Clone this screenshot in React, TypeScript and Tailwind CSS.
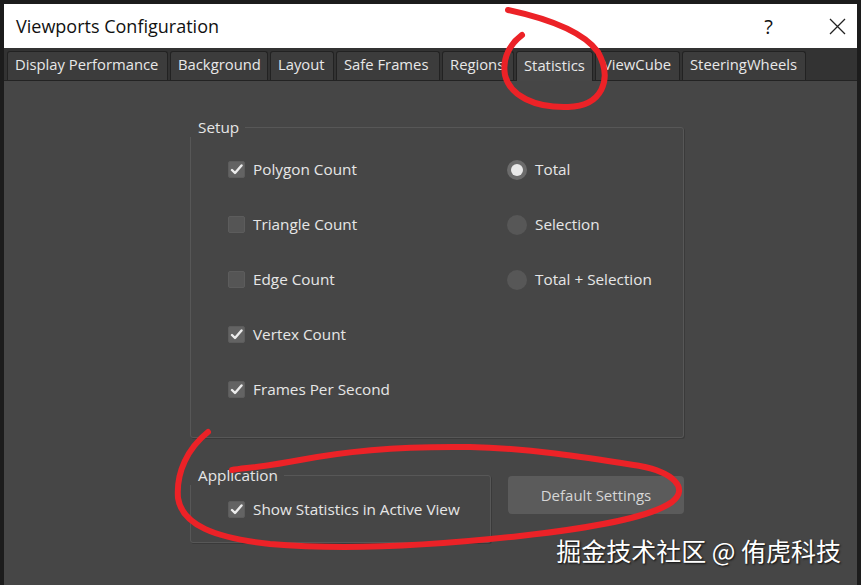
import { ReactNode } from "react";

const tabs = [
  { label: "Display Performance", w: "w-[161px]" },
  { label: "Background", w: "w-[98px]" },
  { label: "Layout", w: "w-[64px]" },
  { label: "Safe Frames", w: "w-[104px]" },
  { label: "Regions", w: "w-[72px]" },
  { label: "Statistics", w: "w-[77px]", active: true },
  { label: "ViewCube", w: "w-[85px]" },
  { label: "SteeringWheels", w: "w-[124px]" },
];

const Check = ({ on, children }: { on?: boolean; children: ReactNode }) => (
  <div className="flex items-center gap-[8px] h-[55px]">
    <span
      className={
        "w-[17px] h-[17px] rounded-[2px] flex items-center justify-center border border-[#5c5c5c] " +
        (on ? "bg-[#636363]" : "bg-[#555555]")
      }
    >
      {on && (
        <svg width="13" height="13" viewBox="0 0 13 13">
          <path d="M2 7 L5 10 L11.5 2.5" fill="none" stroke="#ececec" strokeWidth="2.4" strokeLinecap="round" strokeLinejoin="round" />
        </svg>
      )}
    </span>
    <span>{children}</span>
  </div>
);

const Radio = ({ on, children }: { on?: boolean; children: ReactNode }) => (
  <div className="flex items-center gap-[8px] h-[55px]">
    <span
      className={
        "w-[20px] h-[20px] rounded-full flex items-center justify-center " +
        (on ? "bg-[#6b6b6b]" : "bg-[#575757]")
      }
    >
      {on && <span className="w-[12px] h-[12px] rounded-full bg-[#e9e9e9]" />}
    </span>
    <span>{children}</span>
  </div>
);

export default function App() {
  return (
    <div className="relative w-[861px] h-[585px] overflow-hidden bg-[#1c1c1c] pt-[4px] px-[4px] flex flex-col font-['Open_Sans','Noto_Sans',sans-serif]">
      {/* title bar */}
      <div className="h-[44px] bg-white flex items-center pl-[12px] pr-[10px] text-[#111]">
        <span className="text-[18px]">Viewports Configuration</span>
        <span className="ml-auto text-[20px] mr-[56px] mt-[2px]">?</span>
        <svg width="17" height="17" viewBox="0 0 17 17" className="mr-[1px]">
          <path d="M1 1 L16 16 M16 1 L1 16" stroke="#222" strokeWidth="1.3" />
        </svg>
      </div>

      {/* tabs */}
      <div className="h-[33px] bg-[#333333] flex items-end gap-[2px] pl-[3px] border-b border-[#232323]">
        {tabs.map((t) => (
          <div
            key={t.label}
            className={
              t.w +
              " h-[29px] overflow-hidden whitespace-nowrap border border-b-0 border-[#222] rounded-t-[3px] pl-[7px] pb-[3px] flex items-center text-[14.8px] text-[#e8e8e8] " +
              (t.active ? "bg-[#474747] -mb-px h-[30px]" : "bg-[#3c3c3c]")
            }
          >
            {t.label}
          </div>
        ))}
      </div>

      {/* content */}
      <div className="flex-1 bg-[#464646] pl-[186px] pt-[36px] text-[15.3px] text-[#e6e6e6]">
        <fieldset className="w-[494px] h-[321px] border border-[#575757] rounded-[3px] shadow-[1px_1px_0_#3a3a3a]">
          <legend className="ml-[-1px] pl-[8px] pr-[6px] leading-[20px]">Setup</legend>
          <div className="flex pl-[37px] pt-[5px]">
            <div className="w-[279px]">
              <Check on>Polygon Count</Check>
              <Check>Triangle Count</Check>
              <Check>Edge Count</Check>
              <Check on>Vertex Count</Check>
              <Check on>Frames Per Second</Check>
            </div>
            <div>
              <Radio on>Total</Radio>
              <Radio>Selection</Radio>
              <Radio>Total + Selection</Radio>
            </div>
          </div>
        </fieldset>

        <div className="flex items-start gap-[17px] mt-[27px]">
          <fieldset className="w-[301px] h-[78px] border border-[#575757] rounded-[3px] shadow-[1px_1px_0_#3a3a3a]">
            <legend className="ml-[-1px] pl-[8px] pr-[6px] leading-[20px]">Application</legend>
            <div className="pl-[37px] -mt-[3px]">
              <Check on>Show Statistics in Active View</Check>
            </div>
          </fieldset>
          <button className="mt-[11px] w-[176px] h-[38px] rounded-[4px] bg-[#5b5b5b] text-[15px] text-[#d6d6d6]">
            Default Settings
          </button>
        </div>
      </div>

      {/* watermark */}
      <div className="absolute right-[20px] bottom-[16px] text-[25px] text-white font-['Noto_Sans_CJK_SC',sans-serif] [text-shadow:1px_1px_2px_rgba(0,0,0,0.8)]">
        掘金技术社区 @ 侑虎科技
      </div>

      {/* red annotations */}
      <svg className="absolute inset-0 pointer-events-none" width="861" height="585" viewBox="0 0 861 585">
        <path
          d="M508 10 C545 18 582 30 598 52 C613 80 602 106 568 107 C535 108 510 96 505 75 C502 58 510 44 522 35"
          fill="none"
          stroke="#ec2227"
          strokeWidth="6"
          strokeLinecap="round"
        />
        <path
          d="M208 432 C188 448 176 472 178 498 C182 525 215 538 270 544 C340 550 430 546 520 536 C590 528 650 518 672 502 C690 488 672 472 640 466 C590 458 530 448 470 447 C400 446 340 452 300 460 C270 466 245 468 232 470"
          fill="none"
          stroke="#ec2227"
          strokeWidth="6"
          strokeLinecap="round"
        />
      </svg>
    </div>
  );
}
